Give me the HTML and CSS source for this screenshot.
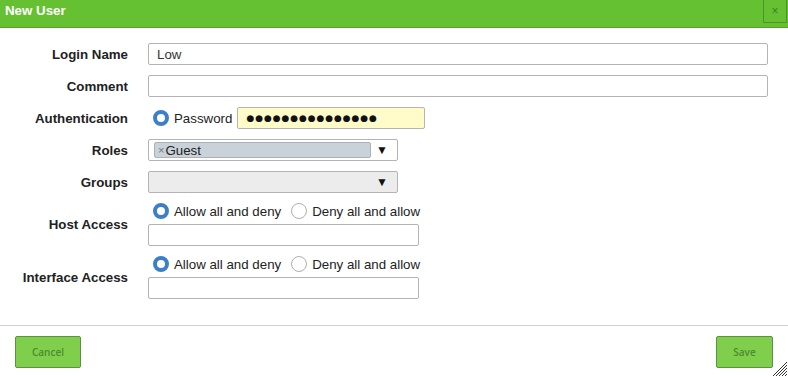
FILE: index.html
```html
<!DOCTYPE html>
<html lang="en">
<head>
<meta charset="UTF-8">
<title>New User</title>
<link rel="stylesheet" href="styles.css">
</head>
<body>
<div class="dialog">
  <div class="titlebar">
    <span class="title">New User</span>
    <button class="close" type="button">&times;</button>
  </div>

  <form class="user-form">
    <label class="lbl" for="login">Login Name</label>
    <div class="field"><input class="txt wide" type="text" id="login" value="Low"></div>

    <label class="lbl" for="comment">Comment</label>
    <div class="field"><input class="txt wide" type="text" id="comment"></div>

    <label class="lbl">Authentication</label>
    <div class="field inline">
      <label class="opt"><input type="radio" name="auth" checked> Password</label>
      <input class="txt pass" type="text" value="●●●●●●●●●●●●●●●">
    </div>

    <label class="lbl">Roles</label>
    <div class="field">
      <div class="select">
        <span class="tag"><span class="tag-x">&times;</span>Guest</span>
        <span class="arrow">▼</span>
      </div>
    </div>

    <label class="lbl">Groups</label>
    <div class="field">
      <div class="select empty">
        <span class="arrow">▼</span>
      </div>
    </div>

    <label class="lbl">Host Access</label>
    <div class="field stack">
      <div class="inline">
        <label class="opt"><input type="radio" name="host" checked> Allow all and deny</label>
        <label class="opt"><input type="radio" name="host"> Deny all and allow</label>
      </div>
      <input class="txt mid" type="text">
    </div>

    <label class="lbl">Interface Access</label>
    <div class="field stack">
      <div class="inline">
        <label class="opt"><input type="radio" name="iface" checked> Allow all and deny</label>
        <label class="opt"><input type="radio" name="iface"> Deny all and allow</label>
      </div>
      <input class="txt mid" type="text">
    </div>
  </form>

  <div class="footer">
    <button class="btn cancel" type="button">Cancel</button>
    <button class="btn save" type="button">Save</button>
  </div>

  <svg class="grip" width="18" height="18" viewBox="0 0 18 18">
    <path d="M17 3 L3 17 M17 6 L6 17 M17 9 L9 17 M17 12 L12 17 M17 15 L15 17" stroke="#333" stroke-width="1"/>
  </svg>
</div>
</body>
</html>
```

FILE: styles.css
```css
body {
  margin: 0;
  font-family: "Liberation Sans", Arial, sans-serif;
  font-size: 13.3px;
  color: #222;
  background: #fff;
}

.dialog {
  position: relative;
  width: 788px;
  height: 377px;
  overflow: hidden;
}

.titlebar {
  display: flex;
  justify-content: space-between;
  align-items: flex-start;
  height: 27px;
  background-color: #66c132;
  border-bottom: 1px solid #56a02c;
}

.title {
  color: #fff;
  font-weight: bold;
  padding: 3px 5px;
  line-height: 15px;
}

.close {
  width: 24px;
  height: 23px;
  margin-right: 1px;
  padding: 0;
  background-color: #66c132;
  border: 1px solid #4e9526;
  border-top: none;
  color: #3f7f22;
  font-size: 12px;
  line-height: 20px;
}

.user-form {
  display: grid;
  grid-template-columns: 128px 1fr;
  column-gap: 20px;
  row-gap: 10px;
  padding: 15px 20px 26px 0;
  border-bottom: 1px solid #d0d0d0;
}

.lbl {
  font-weight: bold;
  text-align: right;
  align-self: center;
}

.field {
  display: flex;
  align-items: center;
}

.inline {
  display: flex;
  align-items: center;
  gap: 5px;
}

.stack {
  flex-direction: column;
  align-items: flex-start;
  gap: 3px;
}

.stack .inline {
  height: 18px;
  gap: 5px;
  margin-top: -1px;
  margin-bottom: 1px;
}

.txt {
  box-sizing: border-box;
  height: 22px;
  margin: 0;
  padding: 2px 8px;
  border: 1px solid #b4b4b4;
  border-radius: 2px;
  font-family: "Liberation Sans", Arial, sans-serif;
  font-size: 13.3px;
  color: #333;
  background: #fff;
}

.wide {
  width: 620px;
}

.mid {
  width: 271px;
}

.pass {
  width: 188px;
  background-color: #fffcc9;
  font-family: "DejaVu Sans", sans-serif;
  font-size: 9px;
  letter-spacing: 0.9px;
  color: #111;
}

.opt {
  display: flex;
  align-items: center;
  gap: 5px;
  color: #222;
}

.opt input {
  appearance: none;
  box-sizing: border-box;
  width: 16px;
  height: 16px;
  margin: 0 0 0 5px;
  border: 1px solid #b0b0b0;
  border-radius: 50%;
  background: #fff;
}

.opt input:checked {
  border: 4px solid #3d7ec9;
}

.select {
  box-sizing: border-box;
  display: flex;
  align-items: center;
  width: 250px;
  height: 22px;
  padding: 0 9px 0 5px;
  border: 1px solid #b4b4b4;
  border-radius: 2px;
  background: #fff;
}

.select.empty {
  background-color: #ececec;
  justify-content: flex-end;
}

.tag {
  box-sizing: border-box;
  display: flex;
  align-items: center;
  width: 217px;
  height: 16px;
  padding-left: 3px;
  background-color: #c9d1d9;
  border: 1px solid #aab1b8;
  border-radius: 2px;
  color: #222;
}

.tag-x {
  color: #777;
  font-size: 11px;
  margin-right: 1px;
}

.arrow {
  margin-left: auto;
  font-size: 12px;
  color: #111;
}

.footer {
  display: flex;
  justify-content: space-between;
  padding: 10px 15px;
}

.btn {
  height: 32px;
  padding: 0;
  background-color: #7fcf4c;
  border: 1px solid #5f8f42;
  border-radius: 2px;
  font-family: "Open Sans", sans-serif;
  font-size: 10px;
  font-weight: 600;
  color: #4e8a30;
}

.cancel {
  width: 66px;
}

.save {
  width: 57px;
}

.grip {
  position: absolute;
  right: 0;
  bottom: 0;
}
```
